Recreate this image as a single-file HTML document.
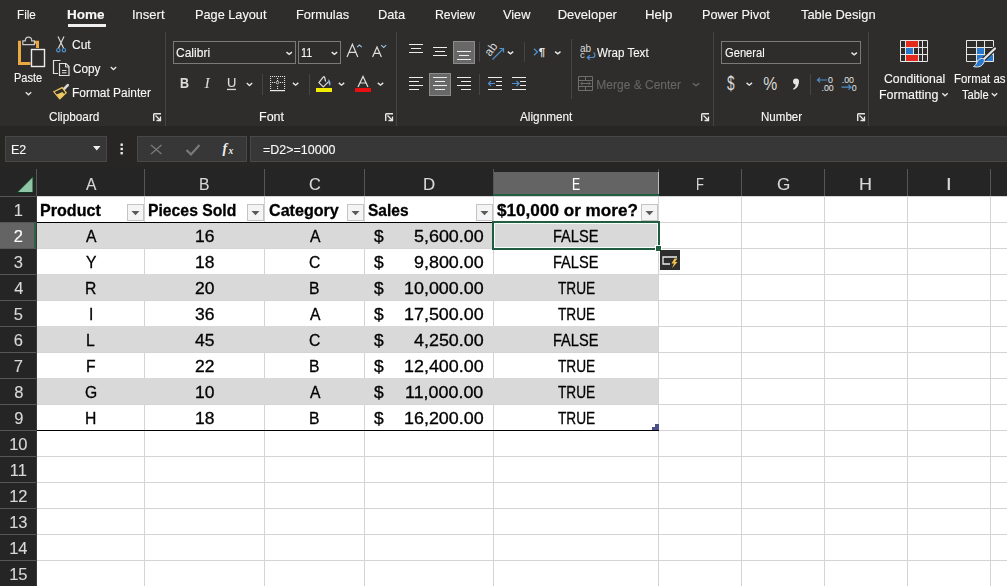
<!DOCTYPE html>
<html><head><meta charset="utf-8"><style>
html,body{margin:0;padding:0;width:1007px;height:586px;overflow:hidden;background:#2e2d2b}
body{position:relative;font-family:"Liberation Sans",sans-serif}
.r{position:absolute}
.t{position:absolute;white-space:nowrap;transform-origin:0 0;filter:grayscale(1);-webkit-text-stroke:0.12px currentColor}
.k{-webkit-text-stroke:0.3px currentColor}
svg{position:absolute;left:0;top:0}
</style></head><body>
<div class="r" style="left:0px;top:0px;width:1007px;height:126px;background:#2e2d2b"></div>
<div class="r" style="left:0px;top:126px;width:1007px;height:41px;background:#272625"></div>
<div class="r" style="left:5px;top:136px;width:102px;height:26px;background:#373737;box-sizing:border-box;border:1px solid #484848"></div>
<div class="r" style="left:137px;top:136px;width:110px;height:26px;background:#373737;box-sizing:border-box;border:1px solid #484848"></div>
<div class="r" style="left:250px;top:136px;width:757px;height:26px;background:#373737;box-sizing:border-box;border:1px solid #484848;border-right:none"></div>
<div class="r" style="left:0px;top:167px;width:1007px;height:29px;background:#252525"></div>
<div class="r" style="left:0px;top:196px;width:36px;height:390px;background:#252525"></div>
<div class="r" style="left:36px;top:196px;width:971px;height:390px;background:#ffffff"></div>
<div class="t" style="left:16.60px;top:8.00px;font-size:13px;line-height:13px;color:#f8f8f8;transform:scaleX(0.9000)">File</div>
<div class="t" style="left:67.26px;top:8.00px;font-size:13px;line-height:13px;color:#f8f8f8;font-weight:700;transform:scaleX(1.0400)">Home</div>
<div class="t" style="left:132.00px;top:8.00px;font-size:13px;line-height:13px;color:#f8f8f8">Insert</div>
<div class="t" style="left:195.32px;top:8.00px;font-size:13px;line-height:13px;color:#f8f8f8;transform:scaleX(0.9792)">Page Layout</div>
<div class="t" style="left:296.32px;top:8.00px;font-size:13px;line-height:13px;color:#f8f8f8;transform:scaleX(0.9811)">Formulas</div>
<div class="t" style="left:378.21px;top:8.00px;font-size:13px;line-height:13px;color:#f8f8f8;transform:scaleX(0.9852)">Data</div>
<div class="t" style="left:434.56px;top:8.00px;font-size:13px;line-height:13px;color:#f8f8f8;transform:scaleX(0.9405)">Review</div>
<div class="t" style="left:502.50px;top:8.00px;font-size:13px;line-height:13px;color:#f8f8f8;transform:scaleX(0.9821)">View</div>
<div class="t" style="left:557.70px;top:8.00px;font-size:13px;line-height:13px;color:#f8f8f8">Developer</div>
<div class="t" style="left:645.28px;top:8.00px;font-size:13px;line-height:13px;color:#f8f8f8;transform:scaleX(1.0192)">Help</div>
<div class="t" style="left:702.42px;top:8.00px;font-size:13px;line-height:13px;color:#f8f8f8;transform:scaleX(0.9768)">Power Pivot</div>
<div class="t" style="left:801.20px;top:8.00px;font-size:13px;line-height:13px;color:#f8f8f8;transform:scaleX(0.9920)">Table Design</div>
<div class="r" style="left:68px;top:24px;width:38px;height:3px;background:#f0f0f0"></div>
<div class="r" style="left:165px;top:32px;width:1px;height:94px;background:#454545"></div>
<div class="r" style="left:396px;top:32px;width:1px;height:94px;background:#454545"></div>
<div class="r" style="left:713px;top:32px;width:1px;height:94px;background:#454545"></div>
<div class="r" style="left:868px;top:32px;width:1px;height:94px;background:#454545"></div>
<div class="r" style="left:262px;top:74px;width:1px;height:21px;background:#454545"></div>
<div class="r" style="left:309px;top:74px;width:1px;height:21px;background:#454545"></div>
<div class="r" style="left:479px;top:42px;width:1px;height:20px;background:#454545"></div>
<div class="r" style="left:479px;top:74px;width:1px;height:21px;background:#454545"></div>
<div class="r" style="left:524px;top:42px;width:1px;height:20px;background:#454545"></div>
<div class="r" style="left:571px;top:39px;width:1px;height:60px;background:#454545"></div>
<div class="r" style="left:810px;top:74px;width:1px;height:21px;background:#454545"></div>
<div class="t" style="left:72.00px;top:39.00px;font-size:12px;line-height:12px;color:#f8f8f8">Cut</div>
<div class="t" style="left:72.50px;top:63.00px;font-size:12px;line-height:12px;color:#f8f8f8;transform:scaleX(0.9821)">Copy</div>
<div class="t" style="left:71.51px;top:87.00px;font-size:12px;line-height:12px;color:#f8f8f8;transform:scaleX(0.9936)">Format Painter</div>
<div class="t" style="left:14.48px;top:72.00px;font-size:12px;line-height:12px;color:#f8f8f8;transform:scaleX(0.9200)">Paste</div>
<div class="t" style="left:48.60px;top:111.00px;font-size:12px;line-height:12px;color:#f8f8f8;transform:scaleX(0.9804)">Clipboard</div>
<div class="t" style="left:258.96px;top:111.00px;font-size:12px;line-height:12px;color:#f8f8f8;transform:scaleX(1.0435)">Font</div>
<div class="t" style="left:520.00px;top:111.00px;font-size:12px;line-height:12px;color:#f8f8f8;transform:scaleX(0.9815)">Alignment</div>
<div class="t" style="left:761.04px;top:111.00px;font-size:12px;line-height:12px;color:#f8f8f8;transform:scaleX(0.9643)">Number</div>
<div class="r" style="left:173px;top:41px;width:123px;height:23px;background:transparent;box-sizing:border-box;border:1px solid #7a7a7a"></div>
<div class="r" style="left:298px;top:41px;width:43px;height:23px;background:transparent;box-sizing:border-box;border:1px solid #7a7a7a"></div>
<div class="r" style="left:721px;top:41px;width:140px;height:23px;background:transparent;box-sizing:border-box;border:1px solid #7a7a7a"></div>
<div class="t" style="left:176.40px;top:46.00px;font-size:13px;line-height:13px;color:#f8f8f8;transform:scaleX(0.9250)">Calibri</div>
<div class="t" style="left:300.88px;top:46.00px;font-size:13px;line-height:13px;color:#f8f8f8;transform:scaleX(0.8250)">11</div>
<div class="t" style="left:724.50px;top:46.00px;font-size:13px;line-height:13px;color:#f8f8f8;transform:scaleX(0.8587)">General</div>
<div class="t" style="left:596.70px;top:47.00px;font-size:12px;line-height:12px;color:#f8f8f8;transform:scaleX(0.9630)">Wrap Text</div>
<div class="t" style="left:596.30px;top:79.00px;font-size:12px;line-height:12px;color:#666666">Merge &amp; Center</div>
<div class="t" style="left:883.70px;top:73.00px;font-size:12px;line-height:12px;color:#f8f8f8;transform:scaleX(1.0217)">Conditional</div>
<div class="t" style="left:878.66px;top:89.00px;font-size:12px;line-height:12px;color:#f8f8f8;transform:scaleX(1.0357)">Formatting</div>
<div class="t" style="left:953.85px;top:73.00px;font-size:12px;line-height:12px;color:#f8f8f8;transform:scaleX(0.9528)">Format as</div>
<div class="t" style="left:961.70px;top:89.00px;font-size:12px;line-height:12px;color:#f8f8f8;transform:scaleX(0.9310)">Table</div>
<div class="t" style="left:179.51px;top:76.00px;font-size:14px;line-height:14px;color:#dcdcdc;font-weight:700;transform:scaleX(0.8889)">B</div>
<div class="t" style="left:204.80px;top:76.00px;font-size:14.5px;line-height:14.5px;color:#dcdcdc;font-style:italic;font-family:'Liberation Serif',serif">I</div>
<div class="t" style="left:226.93px;top:76.50px;font-size:12px;line-height:12px;color:#dcdcdc;transform:scaleX(1.0714)">U</div>
<div class="t" style="left:11.46px;top:144.00px;font-size:12px;line-height:12px;color:#f8f8f8;transform:scaleX(1.0385)">E2</div>
<div class="t" style="left:262.50px;top:143.00px;font-size:13px;line-height:13px;color:#f8f8f8;transform:scaleX(0.9600)">=D2&gt;=10000</div>
<div class="r" style="left:493px;top:172px;width:166px;height:24px;background:#646464"></div>
<div class="r" style="left:144px;top:169px;width:1px;height:27px;background:#565656"></div>
<div class="r" style="left:264px;top:169px;width:1px;height:27px;background:#565656"></div>
<div class="r" style="left:364px;top:169px;width:1px;height:27px;background:#565656"></div>
<div class="r" style="left:493px;top:169px;width:1px;height:27px;background:#565656"></div>
<div class="r" style="left:658px;top:169px;width:1px;height:27px;background:#565656"></div>
<div class="r" style="left:741px;top:169px;width:1px;height:27px;background:#565656"></div>
<div class="r" style="left:824px;top:169px;width:1px;height:27px;background:#565656"></div>
<div class="r" style="left:907px;top:169px;width:1px;height:27px;background:#565656"></div>
<div class="r" style="left:990px;top:169px;width:1px;height:27px;background:#565656"></div>
<div class="r" style="left:36px;top:169px;width:1px;height:27px;background:#565656"></div>
<div class="r" style="left:658px;top:172px;width:1px;height:24px;background:#bdbdbd"></div>
<div class="r" style="left:493px;top:194px;width:166px;height:2px;background:#215e41"></div>
<div class="t" style="left:85.60px;top:176.00px;font-size:16.5px;line-height:16.5px;color:#d8d8d8;transform:scaleX(0.9455)">A</div>
<div class="t" style="left:198.80px;top:176.00px;font-size:16.5px;line-height:16.5px;color:#d8d8d8;transform:scaleX(0.9500)">B</div>
<div class="t" style="left:308.56px;top:176.00px;font-size:16.5px;line-height:16.5px;color:#d8d8d8;transform:scaleX(0.9900)">C</div>
<div class="t" style="left:422.58px;top:176.00px;font-size:16.5px;line-height:16.5px;color:#d8d8d8;transform:scaleX(1.0182)">D</div>
<div class="t" style="left:572.26px;top:176.00px;font-size:16.5px;line-height:16.5px;color:#ffffff;transform:scaleX(0.7400)">E</div>
<div class="t" style="left:696.22px;top:176.00px;font-size:16.5px;line-height:16.5px;color:#d8d8d8;transform:scaleX(0.7778)">F</div>
<div class="t" style="left:776.56px;top:176.00px;font-size:16.5px;line-height:16.5px;color:#d8d8d8;transform:scaleX(1.0364)">G</div>
<div class="t" style="left:859.46px;top:176.00px;font-size:16.5px;line-height:16.5px;color:#d8d8d8;transform:scaleX(1.0900)">H</div>
<div class="t" style="left:946.00px;top:176.00px;font-size:16.5px;line-height:16.5px;color:#d8d8d8;transform:scaleX(1.2500)">I</div>
<div class="r" style="left:36px;top:196px;width:971px;height:1px;background:#d4d4d4"></div>
<div class="r" style="left:36px;top:222px;width:971px;height:1px;background:#d4d4d4"></div>
<div class="r" style="left:36px;top:248px;width:971px;height:1px;background:#d4d4d4"></div>
<div class="r" style="left:36px;top:274px;width:971px;height:1px;background:#d4d4d4"></div>
<div class="r" style="left:36px;top:300px;width:971px;height:1px;background:#d4d4d4"></div>
<div class="r" style="left:36px;top:326px;width:971px;height:1px;background:#d4d4d4"></div>
<div class="r" style="left:36px;top:352px;width:971px;height:1px;background:#d4d4d4"></div>
<div class="r" style="left:36px;top:378px;width:971px;height:1px;background:#d4d4d4"></div>
<div class="r" style="left:36px;top:404px;width:971px;height:1px;background:#d4d4d4"></div>
<div class="r" style="left:36px;top:430px;width:971px;height:1px;background:#d4d4d4"></div>
<div class="r" style="left:36px;top:456px;width:971px;height:1px;background:#d4d4d4"></div>
<div class="r" style="left:36px;top:482px;width:971px;height:1px;background:#d4d4d4"></div>
<div class="r" style="left:36px;top:508px;width:971px;height:1px;background:#d4d4d4"></div>
<div class="r" style="left:36px;top:534px;width:971px;height:1px;background:#d4d4d4"></div>
<div class="r" style="left:36px;top:560px;width:971px;height:1px;background:#d4d4d4"></div>
<div class="r" style="left:144px;top:196px;width:1px;height:390px;background:#d4d4d4"></div>
<div class="r" style="left:264px;top:196px;width:1px;height:390px;background:#d4d4d4"></div>
<div class="r" style="left:364px;top:196px;width:1px;height:390px;background:#d4d4d4"></div>
<div class="r" style="left:493px;top:196px;width:1px;height:390px;background:#d4d4d4"></div>
<div class="r" style="left:658px;top:196px;width:1px;height:390px;background:#d4d4d4"></div>
<div class="r" style="left:741px;top:196px;width:1px;height:390px;background:#d4d4d4"></div>
<div class="r" style="left:824px;top:196px;width:1px;height:390px;background:#d4d4d4"></div>
<div class="r" style="left:907px;top:196px;width:1px;height:390px;background:#d4d4d4"></div>
<div class="r" style="left:990px;top:196px;width:1px;height:390px;background:#d4d4d4"></div>
<div class="r" style="left:37px;top:222px;width:621px;height:26px;background:#d9d9d9"></div>
<div class="r" style="left:37px;top:274px;width:621px;height:26px;background:#d9d9d9"></div>
<div class="r" style="left:37px;top:326px;width:621px;height:26px;background:#d9d9d9"></div>
<div class="r" style="left:37px;top:378px;width:621px;height:26px;background:#d9d9d9"></div>
<div class="r" style="left:37px;top:197px;width:621px;height:25px;background:#ffffff"></div>
<div class="r" style="left:144px;top:197px;width:1px;height:25px;background:#d4d4d4"></div>
<div class="r" style="left:264px;top:197px;width:1px;height:25px;background:#d4d4d4"></div>
<div class="r" style="left:364px;top:197px;width:1px;height:25px;background:#d4d4d4"></div>
<div class="r" style="left:493px;top:197px;width:1px;height:25px;background:#d4d4d4"></div>
<div class="r" style="left:36px;top:222px;width:623px;height:1px;background:#000000"></div>
<div class="r" style="left:36px;top:430px;width:623px;height:1px;background:#000000"></div>
<div class="r" style="left:0px;top:222px;width:36px;height:26px;background:#646464"></div>
<div class="r" style="left:0px;top:196px;width:36px;height:1px;background:#565656"></div>
<div class="r" style="left:0px;top:222px;width:36px;height:1px;background:#565656"></div>
<div class="r" style="left:0px;top:248px;width:36px;height:1px;background:#565656"></div>
<div class="r" style="left:0px;top:274px;width:36px;height:1px;background:#565656"></div>
<div class="r" style="left:0px;top:300px;width:36px;height:1px;background:#565656"></div>
<div class="r" style="left:0px;top:326px;width:36px;height:1px;background:#565656"></div>
<div class="r" style="left:0px;top:352px;width:36px;height:1px;background:#565656"></div>
<div class="r" style="left:0px;top:378px;width:36px;height:1px;background:#565656"></div>
<div class="r" style="left:0px;top:404px;width:36px;height:1px;background:#565656"></div>
<div class="r" style="left:0px;top:430px;width:36px;height:1px;background:#565656"></div>
<div class="r" style="left:0px;top:456px;width:36px;height:1px;background:#565656"></div>
<div class="r" style="left:0px;top:482px;width:36px;height:1px;background:#565656"></div>
<div class="r" style="left:0px;top:508px;width:36px;height:1px;background:#565656"></div>
<div class="r" style="left:0px;top:534px;width:36px;height:1px;background:#565656"></div>
<div class="r" style="left:0px;top:560px;width:36px;height:1px;background:#565656"></div>
<div class="r" style="left:36px;top:196px;width:1px;height:390px;background:#3a3a3a"></div>
<div class="r" style="left:34px;top:222px;width:2px;height:26px;background:#2b5f46"></div>
<div class="t" style="left:13.70px;top:202.00px;font-size:16.5px;line-height:16.5px;color:#d8d8d8">1</div>
<div class="t" style="left:13.70px;top:228.00px;font-size:16.5px;line-height:16.5px;color:#ffffff">2</div>
<div class="t" style="left:13.70px;top:254.00px;font-size:16.5px;line-height:16.5px;color:#d8d8d8">3</div>
<div class="t" style="left:14.20px;top:280.00px;font-size:16.5px;line-height:16.5px;color:#d8d8d8">4</div>
<div class="t" style="left:13.70px;top:306.00px;font-size:16.5px;line-height:16.5px;color:#d8d8d8">5</div>
<div class="t" style="left:13.70px;top:332.00px;font-size:16.5px;line-height:16.5px;color:#d8d8d8">6</div>
<div class="t" style="left:13.70px;top:358.00px;font-size:16.5px;line-height:16.5px;color:#d8d8d8">7</div>
<div class="t" style="left:14.20px;top:384.00px;font-size:16.5px;line-height:16.5px;color:#d8d8d8">8</div>
<div class="t" style="left:14.20px;top:410.00px;font-size:16.5px;line-height:16.5px;color:#d8d8d8">9</div>
<div class="t" style="left:9.20px;top:436.00px;font-size:16.5px;line-height:16.5px;color:#d8d8d8">10</div>
<div class="t" style="left:9.70px;top:462.00px;font-size:16.5px;line-height:16.5px;color:#d8d8d8">11</div>
<div class="t" style="left:9.20px;top:488.00px;font-size:16.5px;line-height:16.5px;color:#d8d8d8">12</div>
<div class="t" style="left:9.20px;top:514.00px;font-size:16.5px;line-height:16.5px;color:#d8d8d8">13</div>
<div class="t" style="left:9.20px;top:540.00px;font-size:16.5px;line-height:16.5px;color:#d8d8d8">14</div>
<div class="t" style="left:9.20px;top:566.00px;font-size:16.5px;line-height:16.5px;color:#d8d8d8">15</div>
<div class="t k" style="left:40.02px;top:202.00px;font-size:16.5px;line-height:16.5px;color:#000000;font-weight:700;transform:scaleX(0.9754)">Product</div>
<div class="t k" style="left:148.05px;top:202.00px;font-size:16.5px;line-height:16.5px;color:#000000;font-weight:700;transform:scaleX(0.9538)">Pieces Sold</div>
<div class="t k" style="left:268.50px;top:202.00px;font-size:16.5px;line-height:16.5px;color:#000000;font-weight:700;transform:scaleX(0.9764)">Category</div>
<div class="t k" style="left:368.30px;top:202.00px;font-size:16.5px;line-height:16.5px;color:#000000;font-weight:700;transform:scaleX(0.9395)">Sales</div>
<div class="t k" style="left:497.30px;top:202.00px;font-size:16.5px;line-height:16.5px;color:#000000;font-weight:700;transform:scaleX(1.0385)">$10,000 or more?</div>
<div class="t k" style="left:85.58px;top:228.00px;font-size:16.5px;line-height:16.5px;color:#000000;transform:scaleX(0.9500)">A</div>
<div class="t k" style="left:194.93px;top:228.00px;font-size:16.5px;line-height:16.5px;color:#000000;transform:scaleX(1.0600)">16</div>
<div class="t k" style="left:309.77px;top:228.00px;font-size:16.5px;line-height:16.5px;color:#000000;transform:scaleX(0.9500)">A</div>
<div class="t k" style="left:374.40px;top:228.00px;font-size:16.5px;line-height:16.5px;color:#000000;transform:scaleX(1.0556)">$</div>
<div class="t k" style="left:414.06px;top:228.00px;font-size:16.5px;line-height:16.5px;color:#000000;transform:scaleX(1.0850)">5,600.00</div>
<div class="t k" style="left:553.32px;top:228.00px;font-size:16.5px;line-height:16.5px;color:#000000;transform:scaleX(0.8840)">FALSE</div>
<div class="t k" style="left:85.58px;top:254.00px;font-size:16.5px;line-height:16.5px;color:#000000;transform:scaleX(0.9500)">Y</div>
<div class="t k" style="left:194.93px;top:254.00px;font-size:16.5px;line-height:16.5px;color:#000000;transform:scaleX(1.0600)">18</div>
<div class="t k" style="left:309.30px;top:254.00px;font-size:16.5px;line-height:16.5px;color:#000000;transform:scaleX(0.9500)">C</div>
<div class="t k" style="left:374.40px;top:254.00px;font-size:16.5px;line-height:16.5px;color:#000000;transform:scaleX(1.0556)">$</div>
<div class="t k" style="left:414.06px;top:254.00px;font-size:16.5px;line-height:16.5px;color:#000000;transform:scaleX(1.0850)">9,800.00</div>
<div class="t k" style="left:553.32px;top:254.00px;font-size:16.5px;line-height:16.5px;color:#000000;transform:scaleX(0.8840)">FALSE</div>
<div class="t k" style="left:85.10px;top:280.00px;font-size:16.5px;line-height:16.5px;color:#000000;transform:scaleX(0.9500)">R</div>
<div class="t k" style="left:194.93px;top:280.00px;font-size:16.5px;line-height:16.5px;color:#000000;transform:scaleX(1.0600)">20</div>
<div class="t k" style="left:309.30px;top:280.00px;font-size:16.5px;line-height:16.5px;color:#000000;transform:scaleX(0.9500)">B</div>
<div class="t k" style="left:374.40px;top:280.00px;font-size:16.5px;line-height:16.5px;color:#000000;transform:scaleX(1.0556)">$</div>
<div class="t k" style="left:404.30px;top:280.00px;font-size:16.5px;line-height:16.5px;color:#000000;transform:scaleX(1.0850)">10,000.00</div>
<div class="t k" style="left:557.65px;top:280.00px;font-size:16.5px;line-height:16.5px;color:#000000;transform:scaleX(0.8289)">TRUE</div>
<div class="t k" style="left:88.90px;top:306.00px;font-size:16.5px;line-height:16.5px;color:#000000;transform:scaleX(0.9500)">I</div>
<div class="t k" style="left:194.93px;top:306.00px;font-size:16.5px;line-height:16.5px;color:#000000;transform:scaleX(1.0600)">36</div>
<div class="t k" style="left:309.77px;top:306.00px;font-size:16.5px;line-height:16.5px;color:#000000;transform:scaleX(0.9500)">A</div>
<div class="t k" style="left:374.40px;top:306.00px;font-size:16.5px;line-height:16.5px;color:#000000;transform:scaleX(1.0556)">$</div>
<div class="t k" style="left:404.30px;top:306.00px;font-size:16.5px;line-height:16.5px;color:#000000;transform:scaleX(1.0850)">17,500.00</div>
<div class="t k" style="left:557.65px;top:306.00px;font-size:16.5px;line-height:16.5px;color:#000000;transform:scaleX(0.8289)">TRUE</div>
<div class="t k" style="left:86.05px;top:332.00px;font-size:16.5px;line-height:16.5px;color:#000000;transform:scaleX(0.9500)">L</div>
<div class="t k" style="left:195.46px;top:332.00px;font-size:16.5px;line-height:16.5px;color:#000000;transform:scaleX(1.0600)">45</div>
<div class="t k" style="left:309.30px;top:332.00px;font-size:16.5px;line-height:16.5px;color:#000000;transform:scaleX(0.9500)">C</div>
<div class="t k" style="left:374.40px;top:332.00px;font-size:16.5px;line-height:16.5px;color:#000000;transform:scaleX(1.0556)">$</div>
<div class="t k" style="left:414.06px;top:332.00px;font-size:16.5px;line-height:16.5px;color:#000000;transform:scaleX(1.0850)">4,250.00</div>
<div class="t k" style="left:553.32px;top:332.00px;font-size:16.5px;line-height:16.5px;color:#000000;transform:scaleX(0.8840)">FALSE</div>
<div class="t k" style="left:85.57px;top:358.00px;font-size:16.5px;line-height:16.5px;color:#000000;transform:scaleX(0.9500)">F</div>
<div class="t k" style="left:194.93px;top:358.00px;font-size:16.5px;line-height:16.5px;color:#000000;transform:scaleX(1.0600)">22</div>
<div class="t k" style="left:309.30px;top:358.00px;font-size:16.5px;line-height:16.5px;color:#000000;transform:scaleX(0.9500)">B</div>
<div class="t k" style="left:374.40px;top:358.00px;font-size:16.5px;line-height:16.5px;color:#000000;transform:scaleX(1.0556)">$</div>
<div class="t k" style="left:404.30px;top:358.00px;font-size:16.5px;line-height:16.5px;color:#000000;transform:scaleX(1.0850)">12,400.00</div>
<div class="t k" style="left:557.65px;top:358.00px;font-size:16.5px;line-height:16.5px;color:#000000;transform:scaleX(0.8289)">TRUE</div>
<div class="t k" style="left:84.62px;top:384.00px;font-size:16.5px;line-height:16.5px;color:#000000;transform:scaleX(0.9500)">G</div>
<div class="t k" style="left:194.93px;top:384.00px;font-size:16.5px;line-height:16.5px;color:#000000;transform:scaleX(1.0600)">10</div>
<div class="t k" style="left:309.77px;top:384.00px;font-size:16.5px;line-height:16.5px;color:#000000;transform:scaleX(0.9500)">A</div>
<div class="t k" style="left:374.40px;top:384.00px;font-size:16.5px;line-height:16.5px;color:#000000;transform:scaleX(1.0556)">$</div>
<div class="t k" style="left:405.38px;top:384.00px;font-size:16.5px;line-height:16.5px;color:#000000;transform:scaleX(1.0850)">11,000.00</div>
<div class="t k" style="left:557.65px;top:384.00px;font-size:16.5px;line-height:16.5px;color:#000000;transform:scaleX(0.8289)">TRUE</div>
<div class="t k" style="left:85.10px;top:410.00px;font-size:16.5px;line-height:16.5px;color:#000000;transform:scaleX(0.9500)">H</div>
<div class="t k" style="left:194.93px;top:410.00px;font-size:16.5px;line-height:16.5px;color:#000000;transform:scaleX(1.0600)">18</div>
<div class="t k" style="left:309.30px;top:410.00px;font-size:16.5px;line-height:16.5px;color:#000000;transform:scaleX(0.9500)">B</div>
<div class="t k" style="left:374.40px;top:410.00px;font-size:16.5px;line-height:16.5px;color:#000000;transform:scaleX(1.0556)">$</div>
<div class="t k" style="left:404.30px;top:410.00px;font-size:16.5px;line-height:16.5px;color:#000000;transform:scaleX(1.0850)">16,200.00</div>
<div class="t k" style="left:557.65px;top:410.00px;font-size:16.5px;line-height:16.5px;color:#000000;transform:scaleX(0.8289)">TRUE</div>
<div class="r" style="left:492px;top:221px;width:168px;height:29px;background:transparent;box-sizing:border-box;border:2px solid #215e41"></div>
<div class="r" style="left:494px;top:223px;width:164px;height:25px;background:transparent;box-sizing:border-box;border:1px solid #f4fff8"></div>
<div class="r" style="left:656px;top:246px;width:5px;height:5px;background:#215e41;outline:1px solid #fff"></div>
<div class="r" style="left:655px;top:424px;width:4px;height:6px;background:#4b4f8a"></div>
<div class="r" style="left:652px;top:427px;width:7px;height:3px;background:#4b4f8a"></div>
<svg width="1007" height="586" viewBox="0 0 1007 586"><path d="M21 42.3H19.5V63.5H30.5" fill="none" stroke="#eaa842" stroke-width="3"/><path d="M34 42.3H37.5V48" fill="none" stroke="#eaa842" stroke-width="3"/><path d="M22.8 44.6V40.8H25.3C25.3 38.6 26.6 37.2 28.5 37.2C30.4 37.2 31.7 38.6 31.7 40.8H34.4V44.6Z" fill="#2e2d2b" stroke="#c8c8c8" stroke-width="1.2"/><rect x="31.5" y="49.5" width="13" height="17" fill="#2e2d2b" stroke="#ececec" stroke-width="1.4"/><path d="M58 36.5L63.5 48M64 36.5L58.5 48" stroke="#d8d8d8" stroke-width="1.2" fill="none"/><circle cx="58.3" cy="50.2" r="1.7" fill="none" stroke="#4f8fcc" stroke-width="1.2"/><circle cx="63.9" cy="50.2" r="1.7" fill="none" stroke="#4f8fcc" stroke-width="1.2"/><path d="M58 73.5H53.5V60.5H60.5" fill="none" stroke="#e0e0e0" stroke-width="1.2"/><path d="M59.5 63.5H66L69 66.5V75.5H59.5Z" fill="#2e2d2b" stroke="#e0e0e0" stroke-width="1.2"/><path d="M65.5 63.5V67H69M62 70.5H66.5M62 72.8H66.5" fill="none" stroke="#e0e0e0" stroke-width="1"/><path d="M67.8 85.2L63.5 89.5" stroke="#d8d8d8" stroke-width="2.6" stroke-linecap="round"/><path d="M53.8 91.8L62.2 87.6L66.2 92.8L59.8 98.8Z" fill="#2e2d2b" stroke="#f0c860" stroke-width="1.2"/><path d="M56.5 94.5L62.5 92L64.5 94.5L59.8 98.8Z" fill="#f0c860"/><path d="M25.8 92.3L28.5 94.7L31.2 92.3" fill="none" stroke="#e6e6e6" stroke-width="1.4"/><path d="M110.8 67.1L113.5 69.5L116.2 67.1" fill="none" stroke="#e6e6e6" stroke-width="1.4"/><path d="M153.7 121.0V113.7M153.7 113.7H161.0" stroke="#e6e6e6" stroke-width="1.4" fill="none"/><path d="M155.5 115.5L160.5 120.5M156.5 120.5H160.5V116.5" stroke="#e6e6e6" stroke-width="1.3" fill="none"/><path d="M286.5 52.1L289.2 54.4L291.9 52.1" fill="none" stroke="#e6e6e6" stroke-width="1.4"/><path d="M331.7 52.1L334.4 54.4L337.1 52.1" fill="none" stroke="#e6e6e6" stroke-width="1.4"/><path d="M347 57L352.4 44.3L357.8 57M349 52.3H355.8" fill="none" stroke="#dedede" stroke-width="1.2"/><path d="M357 47.2L359.4 45L361.8 47.2" fill="none" stroke="#9cc3e5" stroke-width="1.1"/><path d="M372.6 57L377 47L381.4 57M374.2 53.3H379.8" fill="none" stroke="#dedede" stroke-width="1.2"/><path d="M381.2 45.2L383.7 47.4L386.2 45.2" fill="none" stroke="#9cc3e5" stroke-width="1.1"/><path d="M246.8 83.1L249.5 85.5L252.2 83.1" fill="none" stroke="#e6e6e6" stroke-width="1.4"/><path d="M292.9 82.9L295.6 85.2L298.3 82.9" fill="none" stroke="#e6e6e6" stroke-width="1.4"/><path d="M338.8 82.9L341.5 85.2L344.2 82.9" fill="none" stroke="#e6e6e6" stroke-width="1.4"/><path d="M377.8 82.9L380.5 85.2L383.2 82.9" fill="none" stroke="#e6e6e6" stroke-width="1.4"/><rect x="227" y="88.8" width="9" height="1.3" fill="#d8d8d8"/><path d="M270 76h1.1v1.1h-1.1ZM272 76h1.1v1.1h-1.1ZM274 76h1.1v1.1h-1.1ZM276 76h1.1v1.1h-1.1ZM278 76h1.1v1.1h-1.1ZM280 76h1.1v1.1h-1.1ZM282 76h1.1v1.1h-1.1ZM284 76h1.1v1.1h-1.1ZM270 78h1.1v1.1h-1.1ZM284 78h1.1v1.1h-1.1ZM270 80h1.1v1.1h-1.1ZM284 80h1.1v1.1h-1.1ZM270 82h1.1v1.1h-1.1ZM284 82h1.1v1.1h-1.1ZM270 84h1.1v1.1h-1.1ZM284 84h1.1v1.1h-1.1ZM270 86h1.1v1.1h-1.1ZM284 86h1.1v1.1h-1.1ZM270 88h1.1v1.1h-1.1ZM284 88h1.1v1.1h-1.1ZM277 78h1.1v1.1h-1.1ZM277 80h1.1v1.1h-1.1ZM277 86h1.1v1.1h-1.1ZM277 88h1.1v1.1h-1.1ZM272 82h1.1v1.1h-1.1ZM274 82h1.1v1.1h-1.1ZM280 82h1.1v1.1h-1.1ZM282 82h1.1v1.1h-1.1Z" fill="#e0e0e0"/><circle cx="277.5" cy="82.5" r="1.3" fill="none" stroke="#e0e0e0" stroke-width="0.8"/><rect x="270" y="90" width="15" height="1.2" fill="#ececec"/><path d="M325.6 81.5L324.6 77.2Q324 76.2 323.2 77.1L318.9 82.6L323.3 86.9L328.6 81.6" fill="none" stroke="#e0e0e0" stroke-width="1.2" stroke-linejoin="round"/><path d="M328.2 79.2C330.3 80 331.2 83.5 330 86C329.2 85 328.5 83.8 328.4 82.2Z" fill="#8fb0e0"/><rect x="316" y="88" width="16" height="4" fill="#f2ec00"/><path d="M358 87L363 76.5L368 87M359.8 83H366.2" fill="none" stroke="#e0e0e0" stroke-width="1.2"/><rect x="355" y="88" width="16" height="4" fill="#e81010"/><path d="M385.7 121.0V113.7M385.7 113.7H393.0" stroke="#e6e6e6" stroke-width="1.4" fill="none"/><path d="M387.5 115.5L392.5 120.5M388.5 120.5H392.5V116.5" stroke="#e6e6e6" stroke-width="1.3" fill="none"/><rect x="453.5" y="41.5" width="21" height="22" fill="#686868" stroke="#8c8c8c" stroke-width="1"/><rect x="429.5" y="73.5" width="21" height="22" fill="#686868" stroke="#8c8c8c" stroke-width="1"/><path d="M409.0 44.5H423.0M411.0 48.5H421.0M409.0 52.5H423.0M433.0 47.5H447.0M435.0 51.5H445.0M433.0 55.5H447.0M457.0 51.5H471.0M459.0 55.5H469.0M457.0 59.5H471.0M409.0 77.5H423.0M409.0 81.5H419.0M409.0 85.5H423.0M409.0 89.5H419.0M433.0 77.5H447.0M435.0 81.5H445.0M433.0 85.5H447.0M435.0 89.5H445.0M457.0 77.5H471.0M461.0 81.5H471.0M457.0 85.5H471.0M461.0 89.5H471.0M488.0 77.5H502.0M496.0 81.5H502.0M496.0 85.5H502.0M488.0 89.5H502.0M512.0 77.5H526.0M520.0 81.5H526.0M520.0 85.5H526.0M512.0 89.5H526.0" stroke="#ececec" stroke-width="1.2" fill="none"/><path d="M495 83.5H488.5M491 81L488.5 83.5L491 86" stroke="#4f8fcc" stroke-width="1.2" fill="none"/><path d="M512 83.5H519M516.5 81L519 83.5L516.5 86" stroke="#4f8fcc" stroke-width="1.2" fill="none"/><text x="0" y="0" transform="translate(490.3 57) rotate(-55)" font-family="Liberation Sans" font-size="12" fill="#dcdcdc">ab</text><path d="M492.5 59.5L503.5 48.5M499.5 48.5H503.5V52.5" stroke="#4f8fcc" stroke-width="1.2" fill="none"/><path d="M507.8 51.6L510.5 53.9L513.2 51.6" fill="none" stroke="#e6e6e6" stroke-width="1.4"/><path d="M534 48.8L537.4 52L534 55.2" stroke="#4f8fcc" stroke-width="1.3" fill="none"/><text x="538.8" y="55.5" font-family="Liberation Sans" font-size="11.5" font-weight="bold" fill="#e6e6e6">&#182;</text><path d="M555.1 51.6L557.8 53.9L560.5 51.6" fill="none" stroke="#e6e6e6" stroke-width="1.4"/><text x="580" y="51.8" font-family="Liberation Sans" font-size="10" fill="#dcdcdc">ab</text><text x="580" y="58.2" font-family="Liberation Sans" font-size="9.5" fill="#dcdcdc">c</text><path d="M593.5 52.5C595.5 53.5 595.5 57.5 592.5 57.5H587.5M589.8 55.2L587.3 57.5L589.8 59.8" stroke="#4f8fcc" stroke-width="1.2" fill="none"/><path d="M578.5 76.5H592.5V90.5H578.5ZM578.5 80.5H592.5M578.5 86.5H592.5M585.5 76.5V80.5M585.5 86.5V90.5" stroke="#6e6e6e" stroke-width="1" fill="none"/><path d="M580.5 83.5H590.5M582.5 82L580.8 83.5L582.5 85M588.5 82L590.2 83.5L588.5 85" stroke="#6e6e6e" stroke-width="1" fill="none"/><path d="M692.8 83.3L696.0 85.7L699.2 83.3" fill="none" stroke="#6e6e6e" stroke-width="1.4"/><path d="M701.7 121.0V113.7M701.7 113.7H709.0" stroke="#e6e6e6" stroke-width="1.4" fill="none"/><path d="M703.5 115.5L708.5 120.5M704.5 120.5H708.5V116.5" stroke="#e6e6e6" stroke-width="1.3" fill="none"/><path d="M851.5 52.6L854.2 54.9L856.9 52.6" fill="none" stroke="#e6e6e6" stroke-width="1.4"/><text x="0" y="0" transform="translate(727 89.5) scale(0.7 1)" font-family="Liberation Sans" font-size="19.5" fill="#d8d8d8">$</text><path d="M746.6 82.9L749.3 85.2L752.0 82.9" fill="none" stroke="#e6e6e6" stroke-width="1.4"/><text x="0" y="0" transform="translate(763.2 90) scale(0.9 1)" font-family="Liberation Sans" font-size="17.5" fill="#d8d8d8">%</text><circle cx="796" cy="81.5" r="3" fill="#e6e6e6"/><path d="M798.6 82C799 85.5 797 88.5 793.5 89.8L793 88.8C795 87.5 795.8 86 795.5 84Z" fill="#e6e6e6"/><text x="827.9" y="82.5" font-family="Liberation Sans" font-size="8.8" fill="#e6e6e6">0</text><text x="821.5" y="90.6" font-family="Liberation Sans" font-size="8.8" fill="#e6e6e6">.00</text><path d="M827 80H817.5M820 77.6L817.5 80L820 82.4" stroke="#4f8fcc" stroke-width="1.2" fill="none"/><text x="841.7" y="82.5" font-family="Liberation Sans" font-size="8.8" fill="#e6e6e6">.00</text><text x="851.8" y="90.6" font-family="Liberation Sans" font-size="8.8" fill="#e6e6e6">0</text><path d="M841.5 87.2H851M848.5 84.8L851 87.2L848.5 89.6" stroke="#4f8fcc" stroke-width="1.2" fill="none"/><path d="M857.7 121.0V113.7M857.7 113.7H865.0" stroke="#e6e6e6" stroke-width="1.4" fill="none"/><path d="M859.5 115.5L864.5 120.5M860.5 120.5H864.5V116.5" stroke="#e6e6e6" stroke-width="1.3" fill="none"/><rect x="905.5" y="40.5" width="13" height="7" fill="#e42a1c"/><rect x="905.5" y="47.5" width="8" height="7" fill="#2a78cc"/><rect x="905.5" y="54.5" width="13.5" height="7.5" fill="#e42a1c"/><path d="M900.5 40.5H927.5V61.5H900.5ZM900.5 47.5H927.5M900.5 54.5H927.5M905.5 40.5V61.5M918.5 40.5V61.5M922.5 40.5V61.5M913.5 47.5V54.5" stroke="#e6e6e6" stroke-width="1" fill="none"/><path d="M942.3 93.3L945.0 95.7L947.7 93.3" fill="none" stroke="#e6e6e6" stroke-width="1.4"/><rect x="976.5" y="47.5" width="8.5" height="14.5" fill="#2a78cc"/><rect x="985" y="54.5" width="9" height="7.5" fill="#2a78cc"/><path d="M966.5 40.5H993.5V61.5H966.5ZM966.5 47.5H993.5M966.5 54.5H993.5M976.5 40.5V61.5M984.5 40.5V61.5" stroke="#e6e6e6" stroke-width="1" fill="none"/><path d="M995 48.5L984 59" stroke="#2b2b2b" stroke-width="4.5" stroke-linecap="round"/><path d="M995 48.5L984 59" stroke="#e6e6e6" stroke-width="2.2" stroke-linecap="round"/><path d="M983.5 58.5C980 58 977.5 60 976.5 63C975.8 65 974.5 66 973.5 66.5C977 67.5 981 67 983 64C984.5 62 984.8 60 983.5 58.5Z" fill="#2a78cc" stroke="#e6e6e6" stroke-width="1"/><path d="M991.8 93.3L994.5 95.7L997.2 93.3" fill="none" stroke="#e6e6e6" stroke-width="1.4"/><path d="M93 146H100.5L96.75 150.5Z" fill="#f0f0f0"/><rect x="120.5" y="143.5" width="2.4" height="2.4" fill="#e8e8e8"/><rect x="120.5" y="147.8" width="2.4" height="2.4" fill="#e8e8e8"/><rect x="120.5" y="152" width="2.4" height="2.4" fill="#e8e8e8"/><path d="M151 145L161.5 154M161.5 145L151 154" stroke="#7a7a7a" stroke-width="1.3"/><path d="M186.5 150L191 154.5L199.5 145" stroke="#7a7a7a" stroke-width="2.2" fill="none"/><text x="222.5" y="152.5" font-family="Liberation Serif" font-style="italic" font-weight="bold" font-size="14" fill="#f0f0f0">f</text><text x="228.5" y="153.5" font-family="Liberation Serif" font-style="italic" font-weight="bold" font-size="9.5" fill="#f0f0f0">x</text><path d="M17 192.5L33 176.5V192.5Z" fill="#8fc6a6" stroke="#0e3a22" stroke-width="1"/><rect x="127.5" y="204.5" width="16" height="16" fill="#f4f4f4" stroke="#c4c4c4" stroke-width="1"/><path d="M131.5 211H139.5L135.5 215.3Z" fill="#5a5a5a"/><rect x="247.5" y="204.5" width="16" height="16" fill="#f4f4f4" stroke="#c4c4c4" stroke-width="1"/><path d="M251.5 211H259.5L255.5 215.3Z" fill="#5a5a5a"/><rect x="347.5" y="204.5" width="16" height="16" fill="#f4f4f4" stroke="#c4c4c4" stroke-width="1"/><path d="M351.5 211H359.5L355.5 215.3Z" fill="#5a5a5a"/><rect x="476.5" y="204.5" width="16" height="16" fill="#f4f4f4" stroke="#c4c4c4" stroke-width="1"/><path d="M480.5 211H488.5L484.5 215.3Z" fill="#5a5a5a"/><rect x="641.5" y="204.5" width="16" height="16" fill="#f4f4f4" stroke="#c4c4c4" stroke-width="1"/><path d="M645.5 211H653.5L649.5 215.3Z" fill="#5a5a5a"/><rect x="660" y="250" width="20" height="20" fill="#2d2d2d"/><path d="M677 257H663V264H670" stroke="#ececec" stroke-width="1.3" fill="none"/><path d="M674.5 258.5L671.5 263.5H674L672 268.3L677.5 262H675L677.5 258.5Z" fill="#f2c14a"/></svg>
</body></html>
